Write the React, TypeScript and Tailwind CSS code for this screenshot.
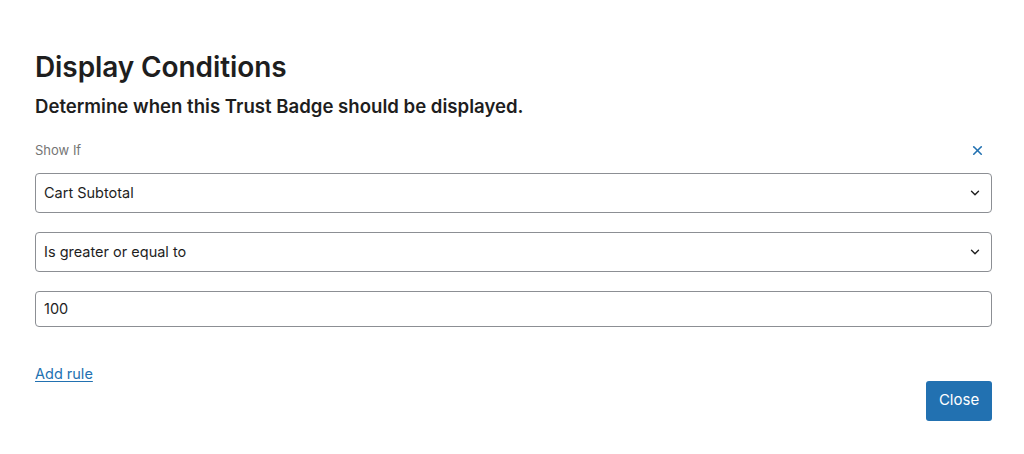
import { ChevronDown, X } from 'lucide-react';

function SelectBox({ value }: { value: string }) {
  return (
    <div className="flex h-10 items-center justify-between rounded border border-[#8c8f94] bg-white pl-2 pr-[9px] text-[14.5px] text-[#1e1e1e]">
      <span>{value}</span>
      <ChevronDown className="h-[14px] w-[14px] text-[#1e1e1e]" strokeWidth={2.4} />
    </div>
  );
}

export default function App() {
  return (
    <div className="h-[454px] w-[1024px] bg-white font-['Inter',sans-serif] text-[#1e1e1e]">
      <div className="pl-[35px] pr-[32px] pt-[50px]">
        <h1 className="text-[28px] font-semibold leading-[34px] tracking-[-0.1px]">Display Conditions</h1>
        <p className="mt-[10px] text-[18.6px] font-semibold leading-6">
          Determine when this Trust Badge should be displayed.
        </p>

        <div className="mt-[23px] flex items-center justify-between">
          <span className="text-[13px] text-[#757575]">Show If</span>
          <button className="mr-[7px] text-[#2271b1]" aria-label="Remove rule">
            <X className="h-[15px] w-[15px]" strokeWidth={2.6} />
          </button>
        </div>

        <div className="mt-[12px] flex flex-col gap-[19px]">
          <SelectBox value="Cart Subtotal" />
          <SelectBox value="Is greater or equal to" />
        </div>

        <div className="mt-[19px] flex h-9 items-center rounded border border-[#8c8f94] bg-white pl-2 text-[14.5px]">
          100
        </div>

        <div className="mt-[36px] flex items-start justify-between">
          <a href="#" className="text-[14.5px] text-[#2271b1] underline underline-offset-2">
            Add rule
          </a>
          <button className="mt-[18px] h-10 w-[66px] rounded-[3px] bg-[#2271b1] text-[15px] text-white">
            Close
          </button>
        </div>
      </div>
    </div>
  );
}
